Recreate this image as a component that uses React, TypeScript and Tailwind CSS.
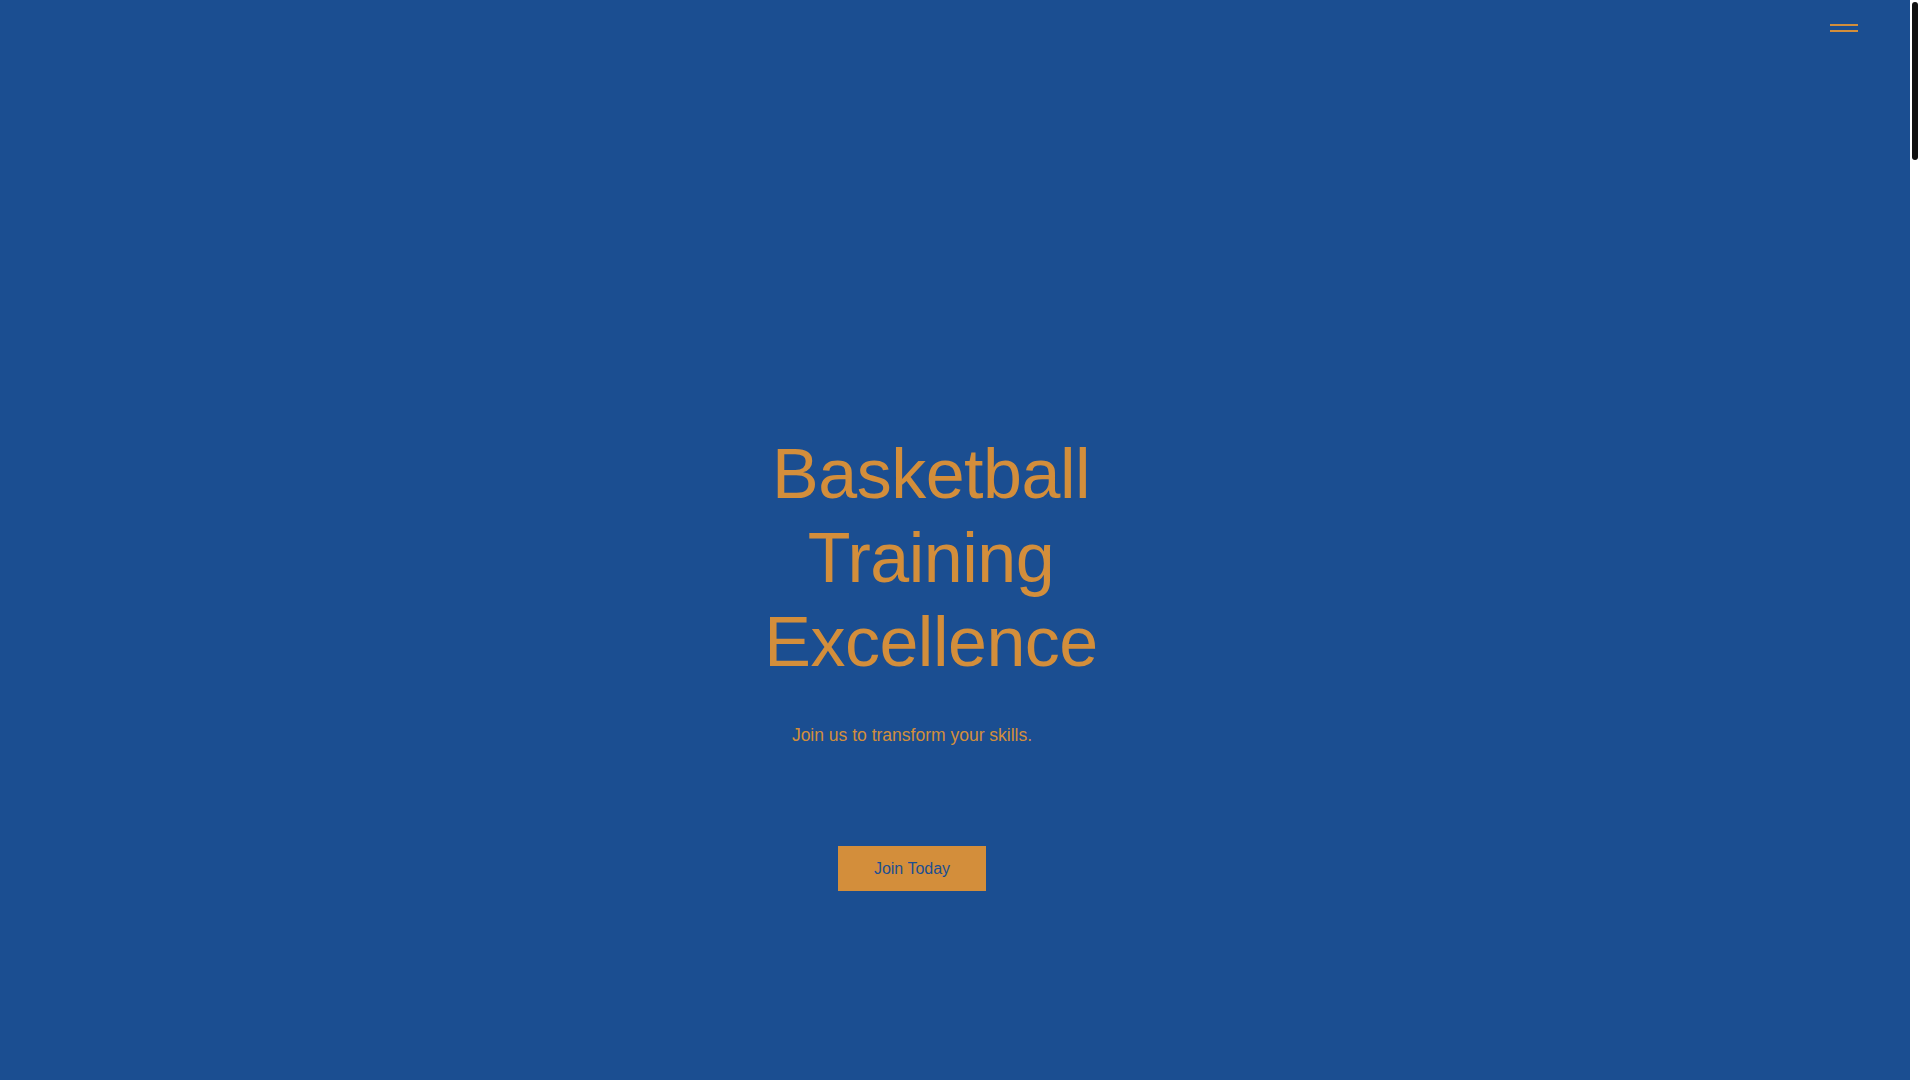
const App = () => {
    return (
        <div className="h-screen flex overflow-hidden bg-[#1b4e91] font-['Liberation_Sans',Arial,sans-serif]">
            <main className="flex-1 flex flex-col">
                <header className="h-[56px] flex items-center justify-end pr-[52px]">
                    <button type="button" aria-label="Open menu" className="flex flex-col gap-[4px]">
                        <span className="block w-[28px] h-[2px] bg-[#d38e3b]"></span>
                        <span className="block w-[28px] h-[2px] bg-[#d38e3b]"></span>
                    </button>
                </header>

                <section className="flex-1 flex flex-col items-center pt-[376px] pr-[86px]">
                    <h1 className="w-[360px] ml-[38px] text-center text-[70px] leading-[84px] tracking-[-0.5px] font-normal text-[#d38e3b]">
                        Basketball Training Excellence
                    </h1>
                    <p className="mt-[37px] text-[17.5px] leading-[28px] text-[#d38e3b]">Join us to transform your skills.</p>
                    <a href="#programs" className="mt-[97px] w-[148px] h-[45px] flex items-center justify-center bg-[#d38e3b] text-[16px] text-[#1b4e91]">
                        Join Today
                    </a>
                </section>
            </main>

            {/* scrollbar */}
            <div className="w-[10px] bg-white pt-[2px] flex justify-center">
                <div className="w-[6px] h-[158px] rounded-full bg-[#111111]"></div>
            </div>
        </div>
    )
}

export default App
